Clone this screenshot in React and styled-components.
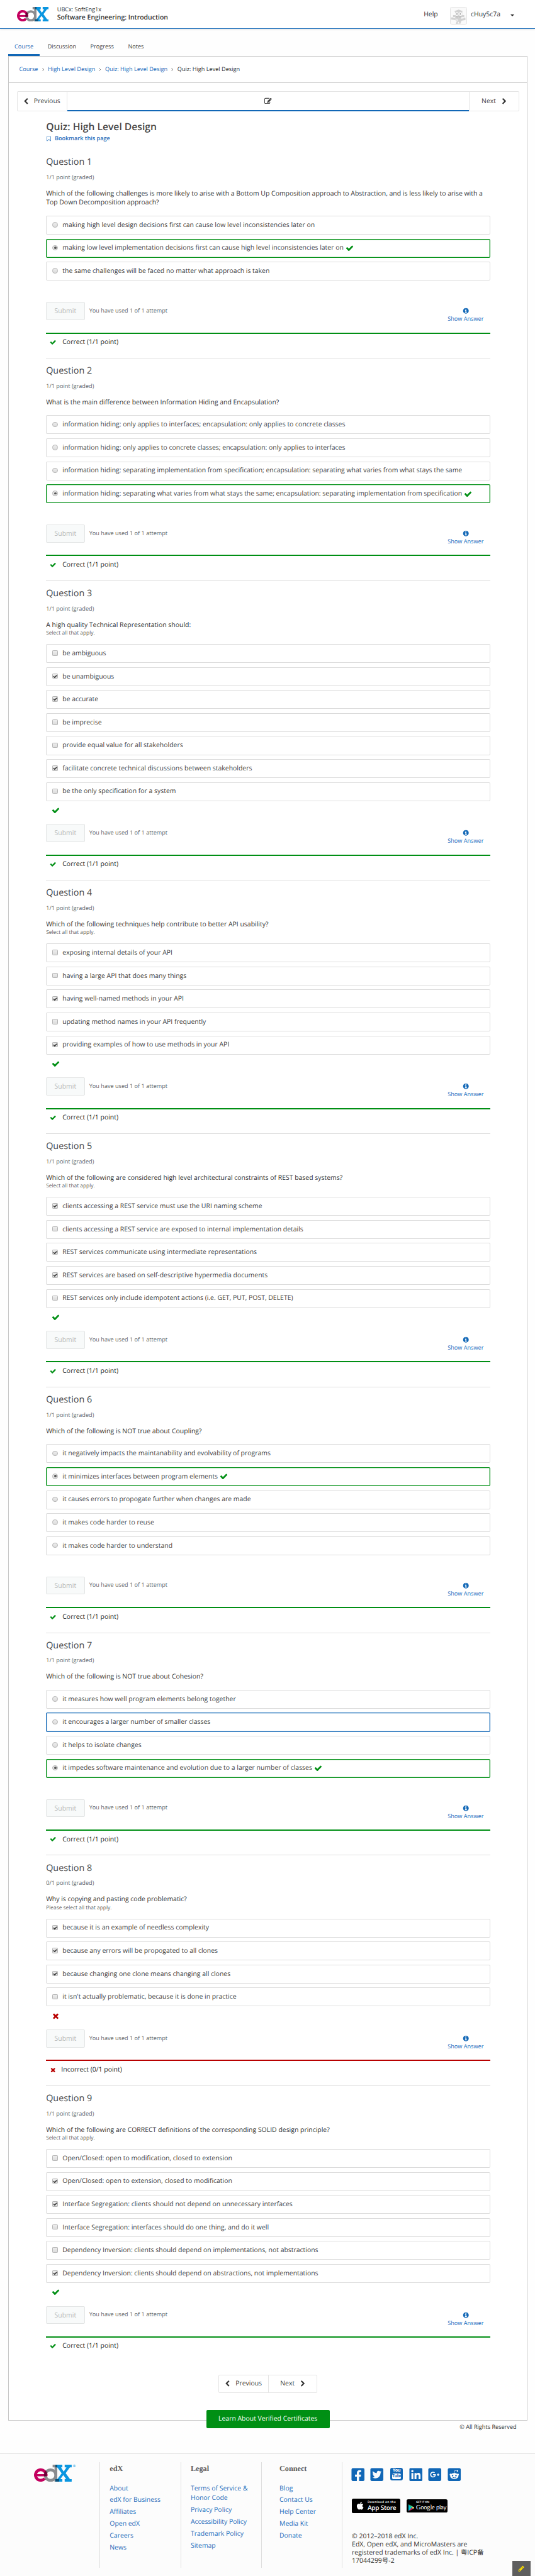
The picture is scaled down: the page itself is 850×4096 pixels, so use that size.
import React from "react";
import styled, { createGlobalStyle } from "styled-components";
import {
  FaApple,
  FaFacebookSquare,
  FaTwitterSquare,
  FaLinkedin,
  FaGooglePlusSquare,
  FaRedditSquare,
} from "react-icons/fa";

const blue = "#1167b6";
const link = "#1d6cbb";
const green = "#008f14";
const red = "#b80000";

const GlobalStyle = createGlobalStyle`
  *, *::before, *::after { box-sizing: border-box; }
  html, body { margin: 0; padding: 0; background: #fff; }
  body { overflow: hidden; }
  p, h1, h2, h3, ul { margin: 0; padding: 0; font-weight: 400; }
`;

const Page = styled.div`
  zoom: 0.6532;
  width: 1301.3px;
  height: 6270.5px;
  overflow: hidden;
  display: flex;
  flex-direction: column;
  position: relative;
  background: #fefefe;
  color: #313131;
  font: 16px/22px "Open Sans", "Noto Sans CJK SC", sans-serif;
  text-rendering: geometricPrecision;
`;

/* ---------- icons ---------- */
const paths = {
  check:
    "M1671 566q0 40-28 68l-724 724-136 136q-28 28-68 28t-68-28l-136-136-362-362q-28-28-28-68t28-68l136-136q28-28 68-28t68 28l294 295 656-657q28-28 68-28t68 28l136 136q28 28 28 68z",
  times:
    "M1490 1322q0 40-28 68l-136 136q-28 28-68 28t-68-28l-294-294-294 294q-28 28-68 28t-68-28l-136-136q-28-28-28-68t28-68l294-294-294-294q-28-28-28-68t28-68l136-136q28-28 68-28t68 28l294 294 294-294q28-28 68-28t68 28l136 136q28 28 28 68t-28 68l-294 294 294 294q28 28 28 68z",
  info:
    "M1152 1376v-160q0-14-9-23t-23-9h-96v-512q0-14-9-23t-23-9h-320q-14 0-23 9t-9 23v160q0 14 9 23t23 9h96v320h-96q-14 0-23 9t-9 23v160q0 14 9 23t23 9h448q14 0 23-9t9-23zm-128-896v-160q0-14-9-23t-23-9h-192q-14 0-23 9t-9 23v160q0 14 9 23t23 9h192q14 0 23-9t9-23zm640 416q0 209-103 385.5t-279.5 279.5-385.5 103-385.5-103-279.5-279.5-103-385.5 103-385.5 279.5-279.5 385.5-103 385.5 103 279.5 279.5 103 385.5z",
  left:
    "M1427 301l-531 531 531 531q19 19 19 45t-19 45l-166 166q-19 19-45 19t-45-19l-742-742q-19-19-19-45t19-45l742-742q19-19 45-19t45 19l166 166q19 19 19 45t-19 45z",
  edit:
    "M888 1184l116-116-152-152-116 116v56h96v96h56zm440-720q-16-16-33 1l-350 350q-17 17-1 33t33-1l350-350q17-17 1-33zm80 594v190q0 119-84.5 203.5t-203.5 84.5h-832q-119 0-203.5-84.5t-84.5-203.5v-832q0-119 84.5-203.5t203.5-84.5h832q63 0 117 25 15 7 18 23 3 17-9 29l-49 49q-14 14-32 8-23-6-45-6h-832q-66 0-113 47t-47 113v832q0 66 47 113t113 47h832q66 0 113-47t47-113v-126q0-13 9-22l64-64q15-15 35-7t20 29zm-96-738l288 288-672 672h-288v-288zm444 132l-92 92-288-288 92-92q28-28 68-28t68 28l152 152q28 28 28 68t-28 68z",
  bookmark:
    "M1408 256h-1024v1242l423-406 89-85 89 85 423 406v-1242zm12-128q23 0 44 9 33 13 52.5 41t19.5 62v1289q0 34-19.5 62t-52.5 41q-19 8-44 8-48 0-83-32l-441-424-441 424q-36 33-83 33-23 0-44-9-33-13-52.5-41t-19.5-62v-1289q0-34 19.5-62t52.5-41q21-9 44-9h1048z",
  pencil:
    "M491 1536l91-91-235-235-91 91v107h128v128h107zm523-928q0-22-22-22-10 0-17 7l-542 542q-7 7-7 17 0 22 22 22 10 0 17-7l542-542q7-7 7-17zm-54-192l416 416-832 832h-416v-416zm683 96q0 53-37 90l-166 166-416-416 166-165q36-38 90-38 53 0 91 38l235 234q37 39 37 91z",
};

const Svg = styled.svg`
  display: block;
  flex: none;
  fill: currentColor;
  transform: ${(p) => (p.$flip ? "scaleX(-1)" : "none")};
`;
const Icon = ({ name, size, flip }) => (
  <Svg viewBox="0 0 1792 1792" width={size} height={size} $flip={flip}>
    <path d={paths[name]} />
  </Svg>
);

const LogoSvg = styled.svg`
  display: block;
  flex: none;
  isolation: isolate;
  g { mix-blend-mode: multiply; }
`;
const EdxLogo = ({ width, height }) => (
  <LogoSvg viewBox="0 0 276 126" width={width} height={height} preserveAspectRatio="none">
    <g fill="none" stroke="#c4005f">
      <path d="M87.5 80A38.5 38.5 0 1 0 78 101" strokeWidth="21" />
      <path d="M14 77H98" strokeWidth="16" />
    </g>
    <g>
      <circle cx="121" cy="76.5" r="38.5" fill="none" stroke="#8b8c8f" strokeWidth="21" />
      <path fill="#8b8c8f" d="M136 0h34v106h14v20h-34V20h-14z" />
    </g>
    <g fill="#0a96e0">
      <path d="M156 0h51v20h-10l20 30 20-30h-13V0h51v20h-13l-31 42 32 44h12v20h-51v-20h11l-21-30-22 30h15v20h-51v-20h14l32-43-32-43h-14z" />
    </g>
  </LogoSvg>
);

/* ---------- header ---------- */
const Header = styled.header`
  flex: none;
  height: 70px;
  display: flex;
  align-items: center;
  padding: 0 50px 0 41px;
  background: #fff;
  border-bottom: 1px solid ${blue};
  box-shadow: 0 2px 5px rgba(0, 0, 0, 0.1);
`;
const CourseTitle = styled.div`
  margin-left: 21px;
  flex: 1;
  padding-bottom: 2px;
`;
const Org = styled.div`
  font-size: 14px;
  line-height: 20px;
`;
const CourseName = styled.div`
  font-weight: 600;
  font-size: 16px;
  line-height: 22px;
`;
const HeaderText = styled.span`
  line-height: 22px;
  padding-top: 4px;
`;
const AvatarFrame = styled.div`
  width: 42px;
  height: 42px;
  margin: 8px 9px 0 29px;
  border: 1px solid #e4e4e4;
  border-radius: 4px;
  background: #fafafa;
  overflow: hidden;
`;
const Caret = styled.span`
  margin: 6px 0 0 25px;
  border: 5px solid transparent;
  border-top: 5px solid #222;
  border-bottom: 0;
`;

const Avatar = () => (
  <AvatarFrame>
    <svg viewBox="1 1 40 40" width="100%" height="100%">
      <g fill="#d2d2d2">
        <path d="M10 10l11-4 11 4-2 1v9h5v5h-7l-1 4 6-1 2-2 3 1v5l-10 2-3 8H14l2-7-5-3-9-1v-5l3-1 2 2 6 1-1-3H7v-5h5v-8z" />
      </g>
      <circle cx="16.5" cy="17" r="4.3" fill="#fff" />
      <circle cx="25.5" cy="17" r="4.3" fill="#fff" />
      <circle cx="16.8" cy="17" r="2" fill="#aaa" />
      <circle cx="25.2" cy="17" r="2" fill="#aaa" />
      <path d="M15 24q6 4 12 0z" fill="#fff" stroke="#aaa" strokeWidth="1" />
      <circle cx="16" cy="32.5" r="2.6" fill="#ddd" stroke="#fff" />
      <path d="M20 36l-2 5h6z" fill="#fafafa" />
    </svg>
  </AvatarFrame>
);

/* ---------- tabs, breadcrumbs, navigation ---------- */
const Tabs = styled.nav`
  flex: none;
  height: 67px;
  padding: 20px 20px 0;
  display: flex;
  gap: 4px;
`;
const Tab = styled.a`
  display: flex;
  align-items: center;
  padding: 0 15.3px;
  font-size: 14px;
  padding-top: ${(p) => (p.$active ? "4px" : "0")};
  color: ${(p) => (p.$active ? link : "#414141")};
  border-bottom: ${(p) => (p.$active ? `4.6px solid ${blue}` : "0")};
`;
const Panel = styled.main`
  flex: none;
  height: 5755px;
  margin: 0 18px 0 20px;
  border: 1px solid #c8c8c8;
  background: #fff;
  display: flex;
  flex-direction: column;
`;
const Breadcrumbs = styled.div`
  flex: none;
  height: 63px;
  padding-left: 25px;
  display: flex;
  align-items: center;
  gap: 9.5px;
  font-size: 14px;
  border-bottom: 1px solid #c8c8c8;
`;
const Crumb = styled.a`
  color: ${link};
`;
const Sep = styled.svg`
  width: 5px;
  height: 8px;
  fill: none;
  stroke: #444;
  stroke-width: 1.3;
`;
const Sequence = styled.div`
  flex: none;
  height: 50px;
  margin: 20px 19.5px 0;
  display: flex;
  border: 1px solid #e5e5e5;
  border-radius: 3px;
`;
const NavCell = styled.a`
  width: 119px;
  display: flex;
  align-items: center;
  justify-content: center;
  gap: 15px;
  color: #414141;
  svg { margin: 0 -3px; color: #313131; }
`;
const SequenceItem = styled.div`
  flex: 1;
  display: flex;
  align-items: center;
  justify-content: center;
  color: #222;
  border: 1px solid #e5e5e5;
  border-width: 0 1px;
  position: relative;
  &::after {
    content: "";
    position: absolute;
    left: 0;
    right: 0;
    bottom: -1.5px;
    height: 3.1px;
    background: ${blue};
  }
`;
const BottomNav = styled(Sequence)`
  align-self: center;
  width: 240px;
  height: 45px;
  margin: 31px 0 0;
  a + a { border-left: 1px solid #e5e5e5; }
`;

/* ---------- problems ---------- */
const Unit = styled.div`
  width: 1080.5px;
  margin-left: 90.5px;
`;
const UnitTitle = styled.h1`
  margin-top: 21px;
  height: 34.5px;
  font-size: 24px;
  font-weight: 600;
  line-height: 32px;
  color: #474747;
`;
const Bookmark = styled.div`
  display: flex;
  align-items: center;
  gap: 7px;
  height: 20px;
  font-size: 14px;
  font-weight: 600;
  color: ${link};
`;
const Problem = styled.section`
  margin-top: ${(p) => (p.$first ? "15.9px" : "0")};
  border-top: 1px solid ${(p) => (p.$first ? "transparent" : "#dedede")};
  padding-top: 15.47px;
`;
const Heading = styled.h2`
  height: 30px;
  font-size: 22px;
  line-height: 30px;
  color: #474747;
`;
const Points = styled.div`
  margin-top: 11px;
  height: 20px;
  font-size: 14px;
  line-height: 20px;
  color: #646464;
`;
const Prompt = styled.p`
  margin-top: 19.6px;
  line-height: 22.4px;
  color: #313131;
`;
const Hint = styled.p`
  font-size: 12.8px;
  line-height: 17px;
  color: #5e5e5e;
`;
const Choices = styled.div`
  margin-top: ${(p) => (p.$multi ? "18px" : "20px")};
  display: flex;
  flex-direction: column;
  gap: 10px;
`;
const tones = { correct: green, focus: blue };
const Choice = styled.label`
  height: 46px;
  display: flex;
  align-items: center;
  padding-left: 14px;
  border: 2px solid ${(p) => tones[p.$tone] || "#dbdbdb"};
  border-radius: 3px;
  box-shadow: ${(p) => (p.$tone ? `inset 0 0 0 0.5px ${tones[p.$tone]}` : "none")};
  color: #414141;
  > svg { margin-left: 5px; color: ${green}; }
`;
const Mark = styled.span`
  width: 13px;
  height: 13px;
  margin: 0 11.5px 2px 0;
  display: grid;
  place-items: center;
  border: 1px solid #b4b4b4;
  border-radius: ${(p) => (p.$square ? "2px" : "50%")};
  background: linear-gradient(#ededed, #dcdcdc);
  color: #333;
`;
const Dot = styled.span`
  width: 6px;
  height: 6px;
  border-radius: 50%;
  background: #555;
`;
const Status = styled.div`
  height: ${(p) => (p.$multi ? "56px" : "52px")};
  padding: 13px 0 0 14px;
  color: ${(p) => (p.$ok ? green : red)};
`;
const Action = styled.div`
  height: 74px;
  display: flex;
`;
const Submit = styled.button`
  width: 94px;
  height: 44px;
  padding: 0;
  border: 1px solid #e3e5e5;
  border-radius: 3px;
  background: #f8fafa;
  color: #b8bab9;
  font: inherit;
`;
const Attempts = styled.div`
  flex: 1;
  margin: 10px 0 0 11px;
  height: 20px;
  font-size: 14px;
  line-height: 20px;
  color: #646464;
`;
const ShowAnswer = styled.a`
  width: 88px;
  margin-right: 16px;
  padding-top: 14px;
  display: flex;
  flex-direction: column;
  align-items: center;
  gap: 1px;
  font-size: 14px;
  line-height: 20px;
  color: ${link};
  svg { color: ${blue}; }
`;
const Result = styled.div`
  height: 62px;
  border-top: 3.1px solid ${(p) => (p.$ok ? green : red)};
  padding: 10px 0 0 9px;
  display: flex;
  align-items: flex-start;
  gap: ${(p) => (p.$ok ? "15px" : "12px")};
  line-height: 22px;
  color: #222;
  svg { margin-top: 3px; color: ${(p) => (p.$ok ? green : red)}; }
`;

const problems = [
  {
    prompt:
      "Which of the following challenges is more likely to arise with a Bottom Up Composition approach to Abstraction, and is less likely to arise with a Top Down Decomposition approach?",
    choices: [
      ["making high level design decisions first can cause low level inconsistencies later on"],
      ["making low level implementation decisions first can cause high level inconsistencies later on", 1, "correct"],
      ["the same challenges will be faced no matter what approach is taken"],
    ],
  },
  {
    prompt: "What is the main difference between Information Hiding and Encapsulation?",
    choices: [
      ["information hiding: only applies to interfaces; encapsulation: only applies to concrete classes"],
      ["information hiding: only applies to concrete classes; encapsulation: only applies to interfaces"],
      ["information hiding: separating implementation from specification; encapsulation: separating what varies from what stays the same"],
      ["information hiding: separating what varies from what stays the same; encapsulation: separating implementation from specification", 1, "correct"],
    ],
  },
  {
    prompt: "A high quality Technical Representation should:",
    hint: "Select all that apply.",
    choices: [
      ["be ambiguous"],
      ["be unambiguous", 1],
      ["be accurate", 1],
      ["be imprecise"],
      ["provide equal value for all stakeholders"],
      ["facilitate concrete technical discussions between stakeholders", 1],
      ["be the only specification for a system"],
    ],
  },
  {
    prompt: "Which of the following techniques help contribute to better API usability?",
    hint: "Select all that apply.",
    choices: [
      ["exposing internal details of your API"],
      ["having a large API that does many things"],
      ["having well-named methods in your API", 1],
      ["updating method names in your API frequently"],
      ["providing examples of how to use methods in your API", 1],
    ],
  },
  {
    prompt: "Which of the following are considered high level architectural constraints of REST based systems?",
    hint: "Select all that apply.",
    choices: [
      ["clients accessing a REST service must use the URI naming scheme", 1],
      ["clients accessing a REST service are exposed to internal implementation details"],
      ["REST services communicate using intermediate representations", 1],
      ["REST services are based on self-descriptive hypermedia documents", 1],
      ["REST services only include idempotent actions (i.e. GET, PUT, POST, DELETE)"],
    ],
  },
  {
    prompt: "Which of the following is NOT true about Coupling?",
    choices: [
      ["it negatively impacts the maintanability and evolvability of programs"],
      ["it minimizes interfaces between program elements", 1, "correct"],
      ["it causes errors to propogate further when changes are made"],
      ["it makes code harder to reuse"],
      ["it makes code harder to understand"],
    ],
  },
  {
    prompt: "Which of the following is NOT true about Cohesion?",
    choices: [
      ["it measures how well program elements belong together"],
      ["it encourages a larger number of smaller classes", 0, "focus"],
      ["it helps to isolate changes"],
      ["it impedes software maintenance and evolution due to a larger number of classes", 1, "correct"],
    ],
  },
  {
    wrong: true,
    prompt: "Why is copying and pasting code problematic?",
    hint: "Please select all that apply.",
    choices: [
      ["because it is an example of needless complexity", 1],
      ["because any errors will be propogated to all clones", 1],
      ["because changing one clone means changing all clones", 1],
      ["it isn't actually problematic, because it is done in practice"],
    ],
  },
  {
    prompt: "Which of the following are CORRECT definitions of the corresponding SOLID design principle?",
    hint: "Select all that apply.",
    choices: [
      ["Open/Closed: open to modification, closed to extension"],
      ["Open/Closed: open to extension, closed to modification", 1],
      ["Interface Segregation: clients should not depend on unnecessary interfaces", 1],
      ["Interface Segregation: interfaces should do one thing, and do it well"],
      ["Dependency Inversion: clients should depend on implementations, not abstractions"],
      ["Dependency Inversion: clients should depend on abstractions, not implementations", 1],
    ],
  },
];

const ProblemBlock = ({ number, data }) => {
  const multi = Boolean(data.hint);
  const ok = !data.wrong;
  const score = ok ? "1/1" : "0/1";
  return (
    <Problem $first={number === 1}>
      <Heading>Question {number}</Heading>
      <Points>{score} point (graded)</Points>
      <Prompt>{data.prompt}</Prompt>
      {multi && <Hint>{data.hint}</Hint>}
      <Choices $multi={multi}>
        {data.choices.map(([text, checked, tone]) => (
          <Choice key={text} $tone={tone}>
            <Mark $square={multi}>
              {checked ? multi ? <Icon name="check" size={11} /> : <Dot /> : null}
            </Mark>
            {text}
            {tone === "correct" && <Icon name="check" size={20} />}
          </Choice>
        ))}
      </Choices>
      <Status $multi={multi} $ok={ok}>
        {multi && <Icon name={ok ? "check" : "times"} size={20} />}
      </Status>
      <Action>
        <Submit disabled>Submit</Submit>
        <Attempts>You have used 1 of 1 attempt</Attempts>
        <ShowAnswer>
          <Icon name="info" size={16} />
          Show Answer
        </ShowAnswer>
      </Action>
      <Result $ok={ok}>
        <Icon name={ok ? "check" : "times"} size={16} />
        {ok ? "Correct" : "Incorrect"} ({score} point)
      </Result>
    </Problem>
  );
};

/* ---------- footer ---------- */
const Closing = styled.div`
  flex: none;
  height: 105px;
  margin-top: -25px;
  padding-right: 45px;
  display: grid;
  grid-template-columns: 1fr 300px 1fr;
  align-items: start;
  position: relative;
`;
const VerifiedButton = styled.a`
  grid-column: 2;
  height: 44px;
  margin: 0 -23.5px 0 23.5px;
  border-radius: 3px;
  background: ${green};
  color: #fff;
  text-align: center;
  line-height: 44px;
`;
const Rights = styled.div`
  justify-self: end;
  margin-top: 30px;
  font-size: 14px;
  line-height: 20px;
`;
const Footer = styled.footer`
  flex: 1;
  display: flex;
  padding: 20px 0 20px 82px;
  border-top: 1px solid #e2e2e2;
  background: #fcfcfc;
`;
const Brand = styled.div`
  width: 160px;
  padding-top: 6px;
  display: flex;
  align-items: flex-start;
  gap: 3px;
`;
const Registered = styled.span`
  color: #0a96e0;
  font-size: 9px;
  line-height: 7px;
`;
const Column = styled.div`
  width: ${(p) => p.$width};
  height: 257px;
  padding-left: ${(p) => p.$indent || "23.3px"};
  border-left: 1px solid #dedede;
`;
const ColumnTitle = styled.h3`
  height: 53px;
  padding-top: 5px;
  font: 700 18.7px/24px "Liberation Serif", serif;
  color: #5e5e5e;
`;
const FooterLink = styled.a`
  display: block;
  width: 145px;
  margin-bottom: 5px;
  line-height: 24px;
  color: ${link};
`;
const Socials = styled.div`
  height: 32px;
  margin: 14px 0 43px -3.5px;
  display: flex;
  gap: 11px;
  color: ${blue};
  svg { width: 36px; height: 36px; flex: none; margin-top: -2px; }
`;
const YouTube = styled.div`
  width: 30.5px;
  height: 30.5px;
  margin: 0 2.75px;
  border-radius: 5px;
  background: ${blue};
  color: #fff;
  display: flex;
  flex-direction: column;
  align-items: center;
  font: 700 11px/13px "Open Sans", sans-serif;
  letter-spacing: -0.6px;
`;
const Tube = styled.span`
  width: 22px;
  height: 14px;
  border-radius: 4px;
  background: #fff;
  color: ${blue};
  text-align: center;
  line-height: 14px;
`;
const Badges = styled.div`
  display: flex;
  align-items: center;
  gap: 15px;
`;
const Badge = styled.div`
  width: ${(p) => p.$width}px;
  height: ${(p) => p.$height}px;
  padding-left: ${(p) => p.$pad}px;
  border-radius: 4px;
  background: #000;
  color: #fff;
  display: flex;
  align-items: center;
  gap: ${(p) => p.$gap}px;
  white-space: nowrap;
`;
const PlayMark = styled.svg`
  width: 15px;
  height: 17px;
  flex: none;
  margin-top: 8px;
`;
const BadgeText = styled.div`
  display: flex;
  flex-direction: column;
`;
const Small = styled.span`
  font-size: ${(p) => p.$size}px;
  font-weight: 600;
  line-height: 10px;
  letter-spacing: ${(p) => p.$spacing || 0}px;
`;
const Store = styled.span`
  font: 600 15.5px/17px "Open Sans", sans-serif;
  letter-spacing: -0.4px;
`;
const Google = styled.span`
  font: 16px/17px "Liberation Serif", serif;
  letter-spacing: -0.3px;
  span { font: 14.5px/17px Lato, sans-serif; }
`;
const Copyright = styled.p`
  width: 330px;
  margin-top: 47px;
  line-height: 20px;
`;
const Notes = styled.div`
  position: absolute;
  left: 1246px;
  bottom: 0;
  width: 44px;
  height: 37px;
  display: grid;
  place-items: center;
  background: #5e5e5e;
  color: #ffe000;
`;

const columns = [
  { title: "edX", width: "197px", links: ["About", "edX for Business", "Affiliates", "Open edX", "Careers", "News"] },
  { title: "Legal", width: "196px", links: ["Terms of Service & Honor Code", "Privacy Policy", "Accessibility Policy", "Trademark Policy", "Sitemap"] },
  { title: "Connect", width: "197px", indent: "43.3px", links: ["Blog", "Contact Us", "Help Center", "Media Kit", "Donate"] },
];

const Chevron = () => (
  <Sep viewBox="0 0 5 8">
    <path d="M.8.8L4 4 .8 7.2" />
  </Sep>
);

export default function App() {
  return (
    <>
      <GlobalStyle />
      <Page>
        <Header>
          <EdxLogo width={77} height={36} />
          <CourseTitle>
            <Org>UBCx: SoftEng1x</Org>
            <CourseName>Software Engineering: Introduction</CourseName>
          </CourseTitle>
          <HeaderText>Help</HeaderText>
          <Avatar />
          <HeaderText>cHuy5c7a</HeaderText>
          <Caret />
        </Header>
        <Tabs>
          <Tab $active>Course</Tab>
          <Tab>Discussion</Tab>
          <Tab>Progress</Tab>
          <Tab>Notes</Tab>
        </Tabs>
        <Panel>
          <Breadcrumbs>
            <Crumb>Course</Crumb>
            <Chevron />
            <Crumb>High Level Design</Crumb>
            <Chevron />
            <Crumb>Quiz: High Level Design</Crumb>
            <Chevron />
            <span>Quiz: High Level Design</span>
          </Breadcrumbs>
          <Sequence>
            <NavCell>
              <Icon name="left" size={16} />
              Previous
            </NavCell>
            <SequenceItem>
              <Icon name="edit" size={18} />
            </SequenceItem>
            <NavCell>
              Next
              <Icon name="left" size={16} flip />
            </NavCell>
          </Sequence>
          <Unit>
            <UnitTitle>Quiz: High Level Design</UnitTitle>
            <Bookmark>
              <Icon name="bookmark" size={14} />
              Bookmark this page
            </Bookmark>
            {problems.map((data, i) => (
              <ProblemBlock key={data.prompt} number={i + 1} data={data} />
            ))}
          </Unit>
          <BottomNav>
            <NavCell>
              <Icon name="left" size={16} />
              Previous
            </NavCell>
            <NavCell>
              Next
              <Icon name="left" size={16} flip />
            </NavCell>
          </BottomNav>
        </Panel>
        <Closing>
          <VerifiedButton>Learn About Verified Certificates</VerifiedButton>
          <Rights>© All Rights Reserved</Rights>
        </Closing>
        <Footer>
          <Brand>
            <EdxLogo width={92} height={42} />
            <Registered>®</Registered>
          </Brand>
          {columns.map((col) => (
            <Column key={col.title} $width={col.width} $indent={col.indent}>
              <ColumnTitle>{col.title}</ColumnTitle>
              {col.links.map((text) => (
                <FooterLink key={text}>{text}</FooterLink>
              ))}
            </Column>
          ))}
          <Column $width="400px" $indent="22.5px">
            <Socials>
              <FaFacebookSquare />
              <FaTwitterSquare />
              <YouTube>
                You
                <Tube>Tube</Tube>
              </YouTube>
              <FaLinkedin />
              <FaGooglePlusSquare />
              <FaRedditSquare />
            </Socials>
            <Badges>
              <Badge $width={118} $height={35} $pad={9} $gap={7}>
                <FaApple size={22} />
                <BadgeText>
                  <Small $size={7.5} $spacing={0.5}>Download on the</Small>
                  <Store>App Store</Store>
                </BadgeText>
              </Badge>
              <Badge $width={100} $height={33} $pad={4} $gap={4}>
                <PlayMark viewBox="0 0 15 17">
                  <path d="M0 0v17l8-8.5z" fill="#00c8d8" />
                  <path d="M0 0l8 8.5 3-2.7z" fill="#3ddc84" />
                  <path d="M0 17l8-8.5 3 2.7z" fill="#e5195f" />
                  <path d="M8 8.5l3-2.7 4 2.7-4 2.7z" fill="#f7d36b" />
                </PlayMark>
                <BadgeText>
                  <Small $size={6.8}>GET IT ON</Small>
                  <Google>
                    Google <span>play</span>
                  </Google>
                </BadgeText>
              </Badge>
            </Badges>
            <Copyright>
              © 2012–2018 edX Inc.
              <br />
              EdX, Open edX, and MicroMasters are registered trademarks of edX Inc. | 粤ICP备17044299号-2
            </Copyright>
          </Column>
        </Footer>
        <Notes>
          <Icon name="pencil" size={16} />
        </Notes>
      </Page>
    </>
  );
}
